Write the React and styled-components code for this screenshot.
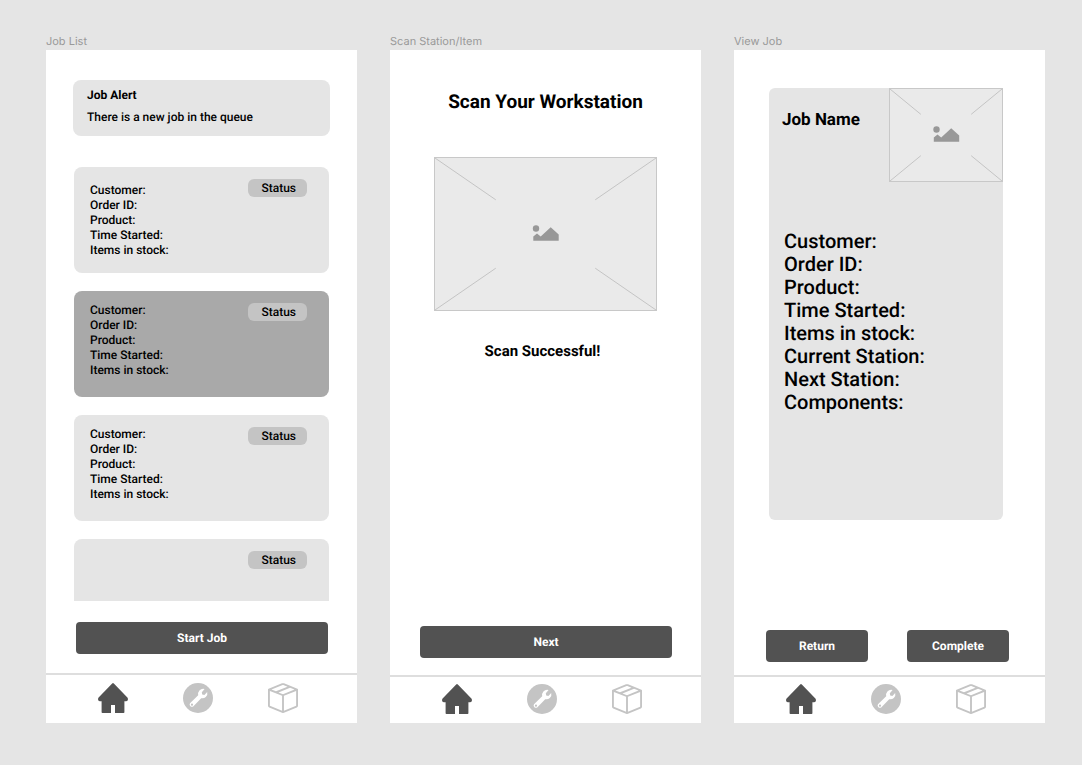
import React from "react";
import styled, { createGlobalStyle } from "styled-components";
import { BsBoxSeam } from "react-icons/bs";

const GlobalStyle = createGlobalStyle`
  *, *::before, *::after { box-sizing: border-box; }
  body {
    margin: 0;
    background: #e5e5e5;
    color: #000;
    font-family: Roboto, "Liberation Sans", sans-serif;
    text-rendering: geometricPrecision;
  }
  h1, h2, h3, p, ul { margin: 0; padding: 0; }
  ul { list-style: none; }
`;

const Board = styled.main`
  display: grid;
  grid-template-columns: repeat(3, minmax(0, 1fr));
  gap: 33px;
  min-height: 100vh;
  padding: 33px 37px 42px 46px;
`;

const FrameColumn = styled.section`
  display: flex;
  flex-direction: column;
`;

const FrameLabel = styled.h2`
  padding-bottom: 1px;
  font: 400 11px/16px Inter, sans-serif;
  color: #999;
`;

const Screen = styled.div`
  flex: 1;
  display: flex;
  flex-direction: column;
  background: #fff;
`;

const Alert = styled.div`
  margin: 30px 27px 31px;
  padding: 7px 14px 11px;
  border-radius: 8px;
  background: #e5e5e5;
`;

const AlertTitle = styled.h3`
  font-size: 12px;
  line-height: 16px;
  font-weight: 700;
`;

const AlertText = styled.p`
  margin-top: 6px;
  font-size: 12px;
  line-height: 16px;
  font-weight: 500;
`;

const JobList = styled.div`
  flex: 1 1 0;
  min-height: 300px;
  margin: 0 28px;
  display: flex;
  flex-direction: column;
  gap: 18px;
  overflow: hidden;
`;

const JobCard = styled.article`
  flex: none;
  display: flex;
  justify-content: space-between;
  align-items: flex-start;
  min-height: 106px;
  padding: 12px 22px 12px 16px;
  border-radius: 8px;
  background: ${(p) => (p.$selected ? "#a9a9a9" : "#e5e5e5")};
`;

const FieldList = styled.ul`
  font-size: 12px;
  line-height: 15px;
  font-weight: 500;
  padding-top: ${(p) => (p.$roomy ? "4px" : "0")};
`;

const StatusChip = styled.span`
  margin-left: auto;
  padding: 0 11px 0 13px;
  border-radius: 6px;
  background: #c4c4c4;
  font-size: 12px;
  line-height: 18px;
  font-weight: 500;
`;

const Actions = styled.div`
  display: flex;
  gap: 39px;
  margin: ${(p) => p.$margin};
`;

const ActionButton = styled.button`
  flex: 1;
  height: 32px;
  padding: 0;
  border: 0;
  border-radius: 4px;
  background: #525252;
  color: #fff;
  font: 700 12px/16px Roboto, sans-serif;
  text-rendering: inherit;
  cursor: pointer;
`;

const NavBar = styled.nav`
  display: flex;
  justify-content: center;
  align-items: center;
  gap: 55px;
  height: ${(p) => p.$height};
  padding: 0 7px 2px 0;
  border-top: 2px solid #dedede;
`;

const NavLink = styled.a`
  display: block;
  height: 30px;
  color: ${(p) => (p.$active ? "#525252" : "#c4c4c4")};
`;

const ScreenTitle = styled.h1`
  margin-top: 40px;
  text-align: center;
  font-size: 19px;
  line-height: 24px;
  font-weight: 700;
`;

const ScanImage = styled.div`
  height: 154px;
  margin: 43px 44px 0;
`;

const ScanResult = styled.p`
  flex: 1;
  margin-top: 30px;
  padding-right: 6px;
  text-align: center;
  font-size: 15px;
  line-height: 20px;
  font-weight: 700;
`;

const JobPanel = styled.article`
  flex: 0 1 auto;
  min-height: 432px;
  margin: 38px 42px auto 35px;
  border-radius: 6px;
  background: #e5e5e5;
`;

const JobHeader = styled.header`
  display: flex;
  justify-content: space-between;
  padding-left: 13px;
`;

const JobTitle = styled.h1`
  margin-top: 20px;
  font-size: 17px;
  line-height: 24px;
  font-weight: 700;
`;

const JobImage = styled.div`
  width: 114px;
  height: 94px;
`;

const JobFields = styled.ul`
  margin-top: 48px;
  padding-left: 15px;
  font-size: 20px;
  line-height: 23px;
  font-weight: 500;
`;

const PlaceholderSvg = styled.svg`
  display: block;
  width: 100%;
  height: 100%;
  border: 1px solid #c8c8c8;
  background: #eaeaea;
`;

function Placeholder() {
  return (
    <PlaceholderSvg role="img" aria-label="Image placeholder">
      <g stroke="#c4c4c4" strokeWidth="1">
        <line x1="0" y1="0" x2="27.5%" y2="27.5%" />
        <line x1="100%" y1="0" x2="72.5%" y2="27.5%" />
        <line x1="0" y1="100%" x2="27.5%" y2="72.5%" />
        <line x1="100%" y1="100%" x2="72.5%" y2="72.5%" />
      </g>
      <svg x="50%" y="50%" overflow="visible">
        <g fill="#989898">
          <circle cx="-9.5" cy="-5.5" r="3.2" />
          <path d="M-12.2 6.8V2.6L-8.5 -0.6L-4.8 2.6L5.2 -6.8L13.2 0.6V6.8Z" />
        </g>
      </svg>
    </PlaceholderSvg>
  );
}

function HomeIcon() {
  return (
    <svg width="30" height="30" viewBox="0 0 30 30" fill="currentColor" aria-hidden="true">
      <path d="M14.2 0.4Q15 -0.2 15.8 0.4L29.4 14.6Q30.4 16 29.6 17.4Q29.2 18.2 28 18.2H26.4V29.2Q26.4 30 25.6 30H17V22H13V30H4.4Q3.6 30 3.6 29.2V18.2H2Q0.8 18.2 0.4 17.4Q-0.4 16 0.6 14.6Z" />
    </svg>
  );
}

function WrenchIcon() {
  return (
    <svg width="30" height="30" viewBox="0 0 30 30" aria-hidden="true">
      <circle cx="15" cy="15" r="15" fill="currentColor" />
      <path
        fill="#fff"
        fillRule="evenodd"
        d="M21.6 6L18.8 9.2L19.2 11.6L21.4 11.9L24.2 9Q25 12 22.8 14Q20.8 15.8 18.2 15.2L10.2 23.4Q8.8 24.4 7.4 23.2Q6 21.6 7 20.2L15.2 12.2Q14.6 9.4 16.4 7.4Q18.6 5.2 21.6 6ZM9 20.6A1.1 1.1 0 1 0 9 22.8A1.1 1.1 0 1 0 9 20.6Z"
      />
    </svg>
  );
}

function Navigation({ height }) {
  return (
    <NavBar $height={height}>
      <NavLink href="#home" aria-label="Home" $active>
        <HomeIcon />
      </NavLink>
      <NavLink href="#tools" aria-label="Tools">
        <WrenchIcon />
      </NavLink>
      <NavLink href="#items" aria-label="Items">
        <BsBoxSeam size={30} aria-hidden="true" />
      </NavLink>
    </NavBar>
  );
}

const CARD_FIELDS = ["Customer:", "Order ID:", "Product:", "Time Started:", "Items in stock:"];
const DETAIL_FIELDS = [...CARD_FIELDS, "Current Station:", "Next Station:", "Components:"];

const JOBS = [
  { id: 1, fields: CARD_FIELDS, roomy: true },
  { id: 2, fields: CARD_FIELDS, selected: true },
  { id: 3, fields: CARD_FIELDS },
  { id: 4, fields: [] },
];

export default function App() {
  return (
    <>
      <GlobalStyle />
      <Board>
        <FrameColumn>
          <FrameLabel>Job List</FrameLabel>
          <Screen>
            <Alert role="status">
              <AlertTitle>Job Alert</AlertTitle>
              <AlertText>There is a new job in the queue</AlertText>
            </Alert>
            <JobList>
              {JOBS.map((job) => (
                <JobCard key={job.id} $selected={job.selected}>
                  {job.fields.length > 0 && (
                    <FieldList $roomy={job.roomy}>
                      {job.fields.map((f) => (
                        <li key={f}>{f}</li>
                      ))}
                    </FieldList>
                  )}
                  <StatusChip>Status</StatusChip>
                </JobCard>
              ))}
            </JobList>
            <Actions $margin="21px 29px 19px 30px">
              <ActionButton type="button">Start Job</ActionButton>
            </Actions>
            <Navigation height="50px" />
          </Screen>
        </FrameColumn>

        <FrameColumn>
          <FrameLabel>Scan Station/Item</FrameLabel>
          <Screen>
            <ScreenTitle>Scan Your Workstation</ScreenTitle>
            <ScanImage>
              <Placeholder />
            </ScanImage>
            <ScanResult>Scan Successful!</ScanResult>
            <Actions $margin="0 29px 17px 30px">
              <ActionButton type="button">Next</ActionButton>
            </Actions>
            <Navigation height="48px" />
          </Screen>
        </FrameColumn>

        <FrameColumn>
          <FrameLabel>View Job</FrameLabel>
          <Screen>
            <JobPanel>
              <JobHeader>
                <JobTitle>Job Name</JobTitle>
                <JobImage>
                  <Placeholder />
                </JobImage>
              </JobHeader>
              <JobFields>
                {DETAIL_FIELDS.map((f) => (
                  <li key={f}>{f}</li>
                ))}
              </JobFields>
            </JobPanel>
            <Actions $margin="0 36px 13px 32px">
              <ActionButton type="button">Return</ActionButton>
              <ActionButton type="button">Complete</ActionButton>
            </Actions>
            <Navigation height="48px" />
          </Screen>
        </FrameColumn>
      </Board>
    </>
  );
}
